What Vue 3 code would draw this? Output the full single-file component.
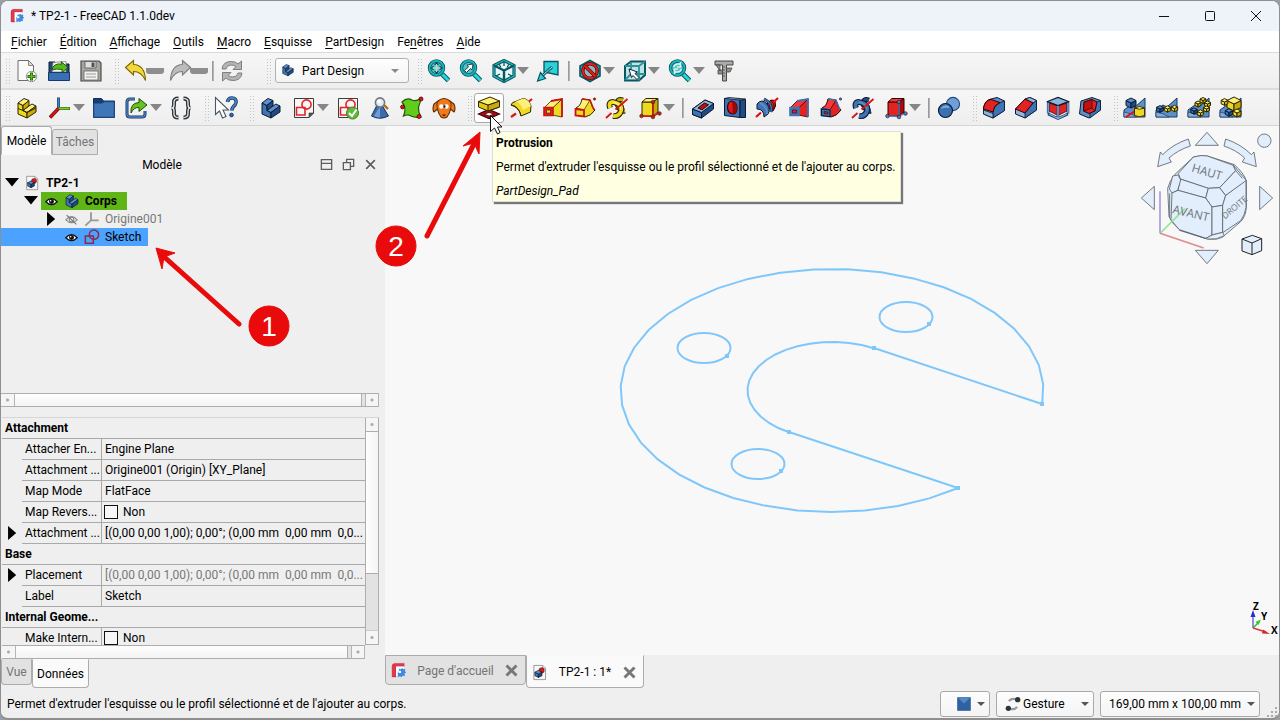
<script setup>
import { computed } from 'vue'

const p = (d, fill = 'none', stroke = 'none', w = 1) => ({ d, fill, stroke, 'stroke-width': w })
const circ = (x, y, r, fill = 'none', stroke = 'none', w = 1) =>
  p(`M${x - r} ${y}a${r} ${r} 0 1 0 ${2 * r} 0a${r} ${r} 0 1 0 ${-2 * r} 0Z`, fill, stroke, w)

const NAVY = '#0b1a2e'
const OLIVE = '#2b2500'
const BLUE = ['#5d8fca', '#3f74b4', '#234b83']
const LIGHT = ['#8fb5de', '#4c80bd', '#2f5f9e']
const YELLOW = ['#fdf07a', '#efd81f', '#c9ab06']
const RED = ['#f23a3a', '#e32222', '#b00808']
const TEAL = '#23d9dd'
const TEALD = '#0a5560'

const body = (c, s) => [
  p('M3 7L8 9.5V14.5L12 16.5V22L3 18Z', c[1], s),
  p('M3 7L9 2.5L14 4.5L8 9.5Z', c[0], s),
  p('M8 9.5L14 4.5V10L8 14.5Z', c[2], s),
  p('M8 14.5L14 10L17 8L21 10L12 16.5Z', c[0], s),
  p('M12 16.5L21 10V16L12 22Z', c[2], s),
]
const cube = (x, y, r, c, s, w = 1) => {
  const h = r / 2
  return [
    p(`M${x - r} ${y - h}L${x} ${y}V${y + r}L${x - r} ${y + h}Z`, c[1], s, w),
    p(`M${x + r} ${y - h}L${x} ${y}V${y + r}L${x + r} ${y + h}Z`, c[2], s, w),
    p(`M${x - r} ${y - h}L${x} ${y - r}L${x + r} ${y - h}L${x} ${y}Z`, c[0], s, w),
  ]
}
const magnifier = [
  p('M15 15L21.500 21.500', 'none', TEALD, 5),
  p('M15 15L21.300 21.300', 'none', TEAL, 3),
  circ(9.500, 9, 7, '#52c3c7', TEALD, 3.4),
  circ(9.500, 9, 7, 'none', '#18b9be', 1.8),
]
const revolved = (c, s, a) => [
  p('M2 21L7 17.500', 'none', a, 2.2),
  p('M18 7L23 3', 'none', a, 2.2),
  p('M2 9Q3 6 6.500 5.500L14 2.500Q20 3 22 10L21.500 16L12 20Q11 12 2 9Z', c[1], s),
  p('M6.500 5.500L14 2.500Q20 3 22 10L14 14Q12 7 6.500 5.500Z', c[0], 'none'),
  p('M2 9Q9 9 12 20', 'none', s, 0.8),
]
const groove = (c, r) => [
  p('M12 8Q16 2 20 5Q22 10 18 15L13 12Z', r[1], '#300', 1),
  p('M15 4Q20 7 19 13', 'none', '#400', 1),
  p('M2 8Q7 2 12 8Q16 13 13 18L9 21Q9 13 2 13Z', c[1], NAVY),
  p('M5 7Q12 10 12 18', 'none', c[0], 2),
  p('M9 3Q18 7 16 16', 'none', NAVY, 3),
  p('M9 3Q18 7 16 16', 'none', c[1], 1.6),
  p('M1 21L6 16.500M18 6.500L23 2', 'none', '#e01010', 2.2),
]
const loft = (c, s, e, hole) => [
  p('M3 12L10 5L21 3L12 12Z', c[0], s, 0.8),
  p('M11 12.500L21 3V21L11 19Z', c[1], s, 0.8),
  p('M10 5L21 3V21', 'none', e, 1.8),
  p('M3 11.500H12V19.500H3Z', hole, e, 1.6),
  p('M5.500 14H9.500V17H5.500Z', c[1], s, 0.6),
]
const sweep = (c, s, e) => [
  p('M3 12Q8 10 9 3L17 4Q19 12 22 14Q18 20 12 21Z', c[1], s),
  p('M9 3L17 4Q14 9 11 14Q7 13 3 12Q8 10 9 3Z', c[0], s, 0.7),
  p('M9 3L17 4L21 14', 'none', e, 1.5),
  p('M2.500 13L11 14V20.500L2.500 19.500Z', c[1], e, 1.8),
  circ(21.500, 3, 1.2, e, s, 0.5),
]
const helix = (c, s) => [
  p('M18 4Q12 2 12 8Q15 16 20 15', 'none', s, 5),
  p('M18 4Q12 2 12 8Q15 16 20 15', 'none', c[2], 3),
  p('M5 12Q3 6 8 6Q18 8 16 15Q14 21 8 20', 'none', s, 5.8),
  p('M5 12Q3 6 8 6Q18 8 16 15Q14 21 8 20', 'none', c[1], 3.8),
  p('M8 6Q16 8 15.500 14', 'none', c[0], 1.4),
  p('M1 22L6.500 17M10.500 13.500L22.500 3', 'none', '#d91414', 1.8),
]
const primitive = (c, s, dot) => [
  p('M4 6H15V20H4Z', c[1], s),
  p('M4 6L8 2.500H20L15 6Z', c[0], s),
  p('M15 6L20 2.500V16L15 20Z', c[2], s),
  p('M4 20L15 20.500L21 17M15 20V6', 'none', dot, 1.4),
  circ(3.500, 20, 1.8, dot, s, 0.6),
  circ(15, 21, 1.8, dot, s, 0.6),
  circ(21.500, 17.500, 1.8, dot, s, 0.6),
  circ(15, 6, 1.8, dot, s, 0.6),
]
const terrain = [
  p('M1 21V14L8 9L12 11L22 2V21Z', '#5c8fca', '#163a66'),
  p('M1 16Q8 17 14 21H1Z', '#86aedb', '#163a66', 0.7),
]
const sketchSheet = [
  p('M2.500 2.500H21.500V17L17 21.500H2.500Z', '#f7f7f5', '#3c3c3a'),
  p('M21.500 17L17 21.500V17Z', '#555', '#333', 0.6),
  p('M4.500 11.500H13V19H4.500Z', 'none', '#e8212b', 1.6),
  circ(14.500, 8.500, 4.6, 'none', '#e8212b', 1.6),
]
const docSheet = [
  p('M4 2H16.500L20.500 6V22H4Z', '#f7f7f5', '#777'),
  p('M16.500 2V6H20.500', '#ddd', '#777', 0.8),
]

const icons = {
  app: [
    p('M3 21V6Q3 2 7 2H20V6.500H8.500V21Z', '#e0394b', '#b32435', 0.6),
    p('M8.500 6.500H20V9.500H13V20H8.500Z', '#fff'),
    p('M13 9L15 10.500L17 8.500L18.500 10L21.500 10L21 13L23 14.500L20.500 16.500L21 20L18 19.500L16 21.500L14 20L11 21.500V14L12.500 13Z', '#3f8be0'),
    p('M12 12.500H15.500V15.500H12Z', '#fff'),
  ],
  newDoc: [
    p('M3 1.500H13.500L18.500 6.500V21.500H3Z', '#fafaf8', '#6e6e6c'),
    p('M13.500 1.500V6.500H18.500Z', '#d8d8d6', '#6e6e6c', 0.8),
    circ(16.500, 17.500, 5.2, '#fff', '#777', 0.8),
    p('M16.500 13.500V21.500M12.500 17.500H20.500', 'none', '#1d5c0c', 3),
    p('M16.500 14.300V20.700M13.300 17.500H19.700', 'none', '#5cc21a', 1.6),
  ],
  open: [
    p('M2 3H8L9 5H22V14H2Z', '#1f4a80', NAVY),
    p('M6 3.500L19 2.500V13H5Z', '#f4f4f2', '#777', 0.7),
    p('M5 11Q6 4 15 5L14 2.500L21 8.500L15 14V10.500Q9 9.500 5 11Z', '#57b91c', '#1d4d08', 0.9),
    p('M1.500 13.500H22.500V21.500H1.500Z', '#3a70b3', '#173b69'),
  ],
  save: [
    p('M2 2H20L22 4V22H2Z', '#a3a6a1', '#4b4d4a', 1.2),
    p('M6 2.500H17V9H6Z', '#dfe0de', '#555', 0.8),
    p('M12.500 3.500H15.500V8H12.500Z', '#50524f'),
    p('M5 12H19V21H5Z', '#f2f2f0', '#666', 0.8),
    p('M7 15H17M7 18H17', 'none', '#999', 1),
  ],
  undo: [p('M1.500 8.500L9.500 1.500V5.500Q21 6 21.500 21.500Q17.500 12.500 9.500 12.500V16Z', '#f2d93b', '#7d6500', 1.1)],
  redo: [p('M22.500 8.500L14.500 1.500V5.500Q3 6 2.500 21.500Q6.500 12.500 14.500 12.500V16Z', '#bcbcbc', '#7e7e7e', 1.1)],
  refresh: [
    p('M2 10Q3 2.500 11 2.500Q16 2.500 18 5L21.500 2V10.500H13L16 7.500Q14 6 11 6Q6.500 6 6 10Z', '#b5b5b5', '#7e7e7e'),
    p('M22 14Q21 21.500 13 21.500Q8 21.500 6 19L2.500 22V13.500H11L8 16.500Q10 18 13 18Q17.500 18 18 14Z', '#b5b5b5', '#7e7e7e'),
  ],
  fitAll: [...magnifier, p('M9.500 3L12 6H7ZM9.500 15L7 12H12ZM3.500 9L6.500 6.500V11.500ZM15.500 9L12.500 11.500V6.500Z', '#17383c'), p('M9.500 5V13M5.500 9H13.500', 'none', '#b8dfe0', 1.4)],
  fitSel: [...magnifier, p('M5.500 11.500L9.500 8L8 6L14 5L13 11L11.500 9.500L7.500 13.500Z', '#fff', '#17383c', 0.9)],
  iso: [
    p('M2 6.500L12 1.500L22 6.500V17L12 22.500L2 17Z', '#e6f6f6', TEALD, 3.2),
    p('M2 6.500L12 1.500L22 6.500V17L12 22.500L2 17Z', 'none', '#1fb7bc', 1.3),
    p('M2 6.500L12 11.500L22 6.500M12 11.500V22.500', 'none', TEALD, 2.4),
    p('M12 2V7M4 17L8 15M20 17L16 15M7 5L9 8.500M17 5L15 8.500', 'none', TEALD, 1.3),
  ],
  face: [
    p('M8 2.500H22V16L8 13Z', '#2bd0d8', TEALD, 1.3),
    p('M16 8L6.500 16.500', 'none', TEALD, 3),
    p('M16 8L6.500 16.500', 'none', '#9ff0f0', 1),
    p('M4.500 13.500L1.500 22L9.500 19.500Z', '#2bd0d8', TEALD, 1.2),
  ],
  drawStyle: [
    p('M2 7L12 1.500L22 7V17L12 22.500L2 17Z', '#2bbfc4', TEALD, 1.6),
    circ(12, 12, 7.2, '#8fb8b8', '#5e0606', 3.4),
    circ(12, 12, 7.2, 'none', '#e02020', 1.9),
    p('M7 7L17 17', 'none', '#5e0606', 3.6),
    p('M7 7L17 17', 'none', '#e02020', 2.2),
  ],
  boxSel: [
    p('M2 7L8 2.500H22V16L16 21.500H2Z', '#bfe3e3', TEALD, 2),
    p('M2 7H16V21.500M16 7L22 2.500M8 3V15H22M8 15L2 21', 'none', '#2a9499', 1.8),
    p('M6 10L14.500 13L12 14.500L16 18.500L14 20.500L10 16.500L8.500 18.500Z', '#fff', '#123', 1),
  ],
  sync: [...magnifier, p('M5.500 8Q7 4.500 11 5L12.500 4V8H9M13.500 10Q12 13.500 8 13L6.500 14V10H10', 'none', '#d8f2f2', 1.6)],
  caliper: [
    p('M3 2H21V6H14.500V22H10.500V6H3Z', '#a9aba6', '#464845'),
    p('M4 6L8 12V6ZM14.500 9H20L18 13H14.500ZM10.500 15H6V11H10.500Z', '#8e908b', '#464845', 0.8),
    p('M11 8H13M11 11H13M11 14H13M11 17H13', 'none', '#464845', 0.8),
  ],
  stdPart: [
    ...body(YELLOW, OLIVE),
    p('M3 12.500L8 14.500L12 16.500L21 12', 'none', OLIVE, 1),
  ],
  axes: [
    p('M10.500 12V1.500', 'none', '#1b3f70', 3), p('M10.500 12V2', 'none', '#4a7fc0', 1.8),
    p('M10.500 12.500H22', 'none', '#275c0c', 3.2), p('M11 12.500H21.500', 'none', '#72d02c', 1.8),
    p('M10.500 12.500L2 21.500', 'none', '#6b0505', 3.4), p('M10.500 12.500L2.500 21', 'none', '#d81818', 2),
  ],
  folder: [p('M1.500 2.500H9.500L11.500 5H22.500V21.500H1.500Z', '#173e72', '#10305c'), p('M2 7.500H10L12 6H22V21H2Z', '#3f76b8', '#2a5a97')],
  share: [
    p('M10 3H5Q2 3 2 6V18Q2 21 5 21H17Q20 21 20 18V15', 'none', '#173b69', 3),
    p('M10 3H5Q2 3 2 6V18Q2 21 5 21H17Q20 21 20 18V15', 'none', '#4c80bd', 1.3),
    p('M6 17Q5 7 14 6.500V2.500L22 9L14 15.500V11.500Q9 11 6 17Z', '#63c421', '#1d4d08'),
  ],
  braces: [
    p('M9.500 2.500Q5 2.500 5 6V9Q5 12 2.500 12Q5 12 5 15V18Q5 21.500 9.500 21.500M14.500 2.500Q19 2.500 19 6V9Q19 12 21.500 12Q19 12 19 15V18Q19 21.500 14.500 21.500', 'none', '#2e363c', 4),
    p('M9.500 2.500Q5 2.500 5 6V9Q5 12 2.500 12Q5 12 5 15V18Q5 21.500 9.500 21.500M14.500 2.500Q19 2.500 19 6V9Q19 12 21.500 12Q19 12 19 15V18Q19 21.500 14.500 21.500', 'none', '#f6f6f6', 1.2),
  ],
  whatsThis: [
    p('M13.500 6Q14 2 18 2Q22.500 2 22 6.500Q21.500 9 19.500 10.500Q18 12 18 14.500', 'none', '#173b69', 3.6),
    p('M13.500 6Q14 2 18 2Q22.500 2 22 6.500Q21.500 9 19.500 10.500Q18 12 18 14.500', 'none', '#4c80bd', 1.8),
    circ(17.500, 19, 1.9, '#3465a4', '#173b69', 0.8),
    p('M1.500 1.500V18.500L5.500 15L8.500 22L12 20.500L9 14H14.500Z', '#fcfcfc', '#4b5966', 1.1),
  ],
  body: body(BLUE, NAVY),
  sketch: sketchSheet,
  validate: [...sketchSheet, circ(16.500, 17, 6, '#62b93b', '#3e8420', 1), p('M13 17L16 20L20.500 13.500', 'none', '#fff', 2)],
  checkGeo: [
    p('M8.500 10H14.500L20.500 20Q12 24.500 3.500 20Z', '#3a6cad', '#14305a'),
    p('M11 12L6 20Q9 21.500 12 21.500V12Z', '#6f9dd3'),
    p('M16 9L20 13', 'none', '#b06a10', 2.4),
    circ(12, 6.500, 4.6, '#dfeaf5', '#777', 1.6),
    circ(11, 5.500, 1.8, '#fff'),
  ],
  binder: [
    p('M2 6Q7 1 12 4Q16 6 21 2Q20 8 18.500 11Q18 16 21 21Q15 22 11 20Q8 18 3.500 20Q7 12 2 6Z', '#62cc1d', '#1c5508', 1.2),
    circ(21, 3, 2, '#e01717', '#5a0000', 0.8), circ(2.500, 11, 1.9, '#e01717', '#5a0000', 0.8), circ(19, 20.500, 2, '#e01717', '#5a0000', 0.8),
  ],
  clone: [
    p('M6 5Q12 0 18 5L22 8Q24 13 22 16L18.500 13Q18 17 15 21Q12 23 9 21Q6 17 5.500 13L2 16Q0 13 2 8Z', '#ee7a1d', '#5c2500', 1.1),
    p('M6 5Q4 9 5.500 13M18 5Q20 9 18.500 13', 'none', '#8c3f05', 1.2),
    circ(9.300, 10.500, 2.2, '#fff'), circ(14.500, 10.500, 2.2, '#fff'), circ(12.500, 10.500, 1.2, '#222'),
    p('M10 18.500H14L12 20.500Z', '#3a1800'),
  ],
  pad: [
    p('M12 13.500L22.500 18L12 22.500L1.500 18Z', '#b00d18', '#3c0005', 1.2), p('M12 16.500L17 18L12 20L7 18Z', '#fff', '#50000a', 0.8),
    p('M1.500 5.500V11L11 15L22.500 11V5L11 9Z', '#e3c90f', OLIVE), p('M11 9V15L22.500 11V5Z', '#c7aa08', OLIVE),
    p('M1.500 5.500L13 1L22.500 5L11 9Z', '#fcef74', OLIVE),
  ],
  revolution: revolved(YELLOW, OLIVE, '#d81818'),
  addLoft: loft(YELLOW, OLIVE, '#c81414', '#e02020'),
  addPipe: sweep(YELLOW, OLIVE, '#c81414'),
  addHelix: helix(YELLOW, OLIVE),
  addPrim: primitive(YELLOW, OLIVE, '#d81818'),
  pocket: [
    p('M1.500 13L14 4L22.500 7.500V13L10.500 22L1.500 18.500Z', BLUE[2], NAVY),
    p('M1.500 13L10.500 16.500V22L1.500 18.500Z', BLUE[1], NAVY),
    p('M1.500 13L14 4L22.500 7.500L10.500 16.500Z', LIGHT[0], NAVY),
    p('M7 12L13.500 7L17.500 8.800L11 13.800Z', '#c40f0f', '#300', 1),
  ],
  hole: [
    p('M1.500 2.500H17V21.500L1.500 19.500Z', BLUE[1], NAVY), p('M17 4L22.500 3.500V21.500H17Z', BLUE[2], NAVY), p('M1.500 2.500L17 4L22.500 3L6 1.500Z', LIGHT[0], NAVY, 0.8),
    p('M9 5Q14 6 14 12Q14 18 9.500 18Q4.500 17 4.500 11Q5 5 9 5Z', '#e01b1b', '#300', 1.2), p('M9 5Q14 6 14 12Q14 18 9.500 18Q10 12 9 5Z', '#9c0808'),
  ],
  groove: groove(BLUE, RED),
  subLoft: loft(RED, '#300', '#3f74b4', '#3f74b4'),
  subPipe: [...sweep(RED, '#300', '#3f74b4'), p('M2.500 13L11 14V20.500L2.500 19.500Z', '#3f74b4', NAVY, 1.2), p('M5 15.500L9 16V18L5 17.500Z', '#c22', NAVY, 0.7)],
  subHelix: helix(BLUE, NAVY),
  subPrim: primitive(RED, '#300', '#4c80bd'),
  boolean: [circ(16, 8, 6.6, '#6f9fd6', '#234b83', 1.1), circ(8.500, 14.500, 7, '#3c70b0', NAVY, 1.2), p('M4 13Q5 9.500 9 9.500Q13 10 12 12Q8 11 4 13Z', '#82acdc')],
  fillet: [
    p('M1.500 12Q3 4 9 3L15 1.500L22.500 5V14.500L11 22L1.500 18Z', BLUE[0], NAVY),
    p('M11 22V16Q12 8 22.500 5V14.500Z', BLUE[1], NAVY, 0.8), p('M1.500 18V14L11 17.500V22Z', LIGHT[0], NAVY, 0.8),
    p('M1.500 12Q3 4 9 3.500L18 6.500Q12 9 11 16L1.500 13Z', RED[1], '#300', 1),
  ],
  chamfer: [
    p('M1.500 13L11 3L16 1.500L22.500 4.500V14L11 22L1.500 18Z', LIGHT[0], NAVY),
    p('M11 22V17L19 7L22.500 4.500V14Z', BLUE[1], NAVY, 0.8), p('M11 3L16 1.500L22.500 4.500L19 7Z', LIGHT[0], NAVY, 0.8),
    p('M1.500 13L11 3L19 7L11 17Z', RED[1], '#300', 1),
  ],
  draft: [
    p('M2 6L12 9.500L22 6V17L12 22.500L2 17Z', '#eef3f8', NAVY), p('M3 7L12 10L21 7V15L12 19.500L3 15Z', RED[1], '#300', 0.8),
    p('M1.500 5.500L12 1.500L22.500 5.500L12 9.500Z', LIGHT[0], NAVY, 1.2),
    p('M12 9.500V22.500M2.200 6V17.500M22 6V17.500M2 18L12 22.500L22 18', 'none', '#1d4375', 2.6), p('M12 10V22M2.200 7V17M22 7V17M3 18L12 22.500L21 18', 'none', '#86aedb', 1.3),
  ],
  thickness: [
    p('M3 5L14 1.500L22.500 4.500V14L11 22L1.500 18Z', BLUE[0], NAVY), p('M17 7L22.500 4.500V14L12 22V17Z', BLUE[1], NAVY, 0.8),
    p('M6 6L14 3.500L19 6L17 15L11 17.500L5.500 15Z', RED[1], '#300', 1), p('M6 6L14 3.500V12L5.500 15Z', '#c01010', '#300', 0.7), p('M14 12L17 15', 'none', '#300', 0.8),
  ],
  mirrored: [...terrain, ...cube(8, 7, 5, BLUE, NAVY), p('M3 21L12 15', 'none', '#e01010', 2), p('M11.500 12V19.500Q16.500 22 21.500 19.500V12Z', YELLOW[1], OLIVE, 0.9), p('M11.500 12Q16.500 9 21.500 12Q16.500 14.500 11.500 12Z', YELLOW[0], OLIVE, 0.9)],
  linear: [...terrain, ...cube(5, 13, 3.4, BLUE, NAVY), ...cube(12.500, 13, 3.2, YELLOW, OLIVE), ...cube(19.500, 12.500, 3.2, YELLOW, OLIVE)],
  polar: [...terrain, ...cube(11, 8, 3, YELLOW, OLIVE), ...cube(16, 4.500, 3, YELLOW, OLIVE), ...cube(20.500, 8, 3, YELLOW, OLIVE), ...cube(19.500, 13, 3, YELLOW, OLIVE), ...cube(13.500, 17, 3.2, YELLOW, OLIVE), ...cube(7, 15, 3.2, BLUE, NAVY)],
  multi: [...terrain, ...cube(15, 8, 7, YELLOW, OLIVE), ...cube(5.500, 6, 3.4, YELLOW, OLIVE), ...cube(10, 16.500, 3.8, BLUE, NAVY), ...cube(18, 17, 4, YELLOW, OLIVE)],
  docPart: [...docSheet, circ(15, 9, 3.8, '#d81818', '#500', 0.7), ...cube(10.500, 14, 5, BLUE, NAVY)],
  sketchSmall: [p('M2 10.500H14V21.500H2Z', 'none', '#8c2a4c', 2.3), circ(15, 8.500, 7, 'none', '#8c2a4c', 2.3)],
  originGray: [p('M10.500 14V2M10.500 14H22M10.500 14L2 22', 'none', '#999', 2.8)],
  eye: [p('M1.500 12.500Q12 1 22.500 12.500Q12 23 1.500 12.500Z', '#fff', '#111', 2.4), circ(12, 12, 4.6, '#111'), circ(10.500, 10.500, 1.4, '#fff')],
  eyeOff: [p('M1.500 12.500Q12 1 22.500 12.500Q12 23 1.500 12.500Z', 'none', '#8a8a8a', 2), circ(12, 12, 4.2, 'none', '#8a8a8a', 2), p('M3 4L21 21', 'none', '#777', 2)],
  close: [p('M4 4L20 20M20 4L4 20', 'none', '#777', 4.6)],
  closeThin: [p('M4 4L20 20M20 4L4 20', 'none', '#5c5c5c', 3)],
  dock: [p('M2.500 3H21.500V21H2.500ZM2.500 10H21.500', 'none', '#5c5c5c', 2.4)],
  float: [p('M8.500 9V2.500H21.500V15.500H15M2.500 8.500H15.500V21.500H2.500Z', 'none', '#5c5c5c', 2.4)],
  orbit: [
    p('M6 8Q9 2.500 17 5', 'none', '#999', 3.2), circ(19, 5.500, 4, '#2d3436'),
    p('M18 16Q15 21.500 7 19', 'none', '#999', 3.2), circ(5, 18.500, 4, '#2d3436'),
  ],
  blueSquare: [p('M1 1H23V23H1Z', '#2f62a3', '#1c4276', 1), p('M1 1H23L12 11Z', '#5588c4')],
}

const b = (icon, label, split = false, active = false) => ({ icon, label, split, active })
const sep = { sep: true }

const fileBar = [b('newDoc', 'Nouveau'), b('open', 'Ouvrir'), b('save', 'Enregistrer')]
const historyBar = [b('undo', 'Annuler', true), b('redo', 'Rétablir', true), sep, b('refresh', 'Rafraîchir')]
const viewBar = [
  b('fitAll', 'Tout afficher'), b('fitSel', 'Ajuster à la sélection'), b('iso', 'Isométrique', true), b('face', 'Aligner'), sep,
  b('drawStyle', 'Style de représentation', true), b('boxSel', 'Sélection', true), b('sync', 'Synchroniser la vue', true), b('caliper', 'Mesurer'),
]
const workGroups = [
  [b('stdPart', 'Pièce'), b('axes', 'Repère', true), b('folder', 'Groupe'), b('share', 'Lien', true), b('braces', 'Variables')],
  [b('whatsThis', "Qu'est-ce que c'est ?")],
  [b('body', 'Corps'), b('sketch', 'Esquisse', true), b('validate', 'Valider'), b('checkGeo', 'Vérifier'), b('binder', 'Forme liée'), b('clone', 'Clone')],
  [
    b('pad', 'Protrusion', false, true), b('revolution', 'Révolution'), b('addLoft', 'Lissage'), b('addPipe', 'Balayage'), b('addHelix', 'Hélice'), b('addPrim', 'Primitive', true), sep,
    b('pocket', 'Cavité'), b('hole', 'Perçage'), b('groove', 'Rainure'), b('subLoft', 'Lissage soustractif'), b('subPipe', 'Balayage soustractif'), b('subHelix', 'Hélice soustractive'), b('subPrim', 'Primitive soustractive', true), sep,
    b('boolean', 'Opération booléenne'),
  ],
  [b('fillet', 'Congé'), b('chamfer', 'Chanfrein'), b('draft', 'Dépouille'), b('thickness', 'Coque')],
  [b('mirrored', 'Symétrie'), b('linear', 'Répétition linéaire'), b('polar', 'Répétition circulaire'), b('multi', 'Transformation multiple')],
]

const menus = [['', 'F', 'ichier'], ['', 'É', 'dition'], ['', 'A', 'ffichage'], ['', 'O', 'utils'], ['', 'M', 'acro'], ['', 'E', 'squisse'], ['', 'P', 'artDesign'], ['Fe', 'n', 'êtres'], ['', 'A', 'ide']]

const placement = '[(0,00 0,00 1,00); 0,00°; (0,00 mm\u00a0 0,00 mm\u00a0 0,0...'
const properties = [
  { group: 'Attachment' },
  { name: 'Attacher En...', value: 'Engine Plane' },
  { name: 'Attachment ...', value: 'Origine001 (Origin) [XY_Plane]' },
  { name: 'Map Mode', value: 'FlatFace' },
  { name: 'Map Revers...', check: true },
  { name: 'Attachment ...', value: placement, expand: true },
  { group: 'Base' },
  { name: 'Placement', value: placement, expand: true, muted: true },
  { name: 'Label', value: 'Sketch' },
  { group: 'Internal Geome...' },
  { name: 'Make Intern...', check: true },
]

const arc = (rx, ry, from, to, n) =>
  Array.from({ length: n + 1 }, (_, i) => {
    const t = ((from + ((to - from) * i) / n) * Math.PI) / 180
    return `${(832 + rx * Math.cos(t)).toFixed(1)},${(390.5 - ry * Math.sin(t)).toFixed(1)}`
  }).join(' ')
const outer = computed(() => arc(211.5, 121.5, -6.3, 306.6, 34))
const inner = computed(() => arc(84.5, 48.5, 60.5, 239.5, 20))
const holes = [[906, 317], [704, 348], [758, 464]]
const vertices = [[874, 348], [1042, 404], [789, 432], [958, 488], [929, 324], [727, 356], [781, 471]]
</script>

<template>
  <div class="window">
    <header class="titlebar">
      <svg class="logo" viewBox="0 0 24 24"><path v-for="(s, i) in icons.app" :key="i" v-bind="s" /></svg>
      <h1>* TP2-1 - FreeCAD 1.1.0dev</h1>
      <div class="controls">
        <button aria-label="Réduire"><svg viewBox="0 0 12 12"><path d="M1 6.500H11" /></svg></button>
        <button aria-label="Agrandir"><svg viewBox="0 0 12 12"><rect x="1.500" y="1.500" width="9" height="9" rx="1" /></svg></button>
        <button aria-label="Fermer"><svg viewBox="0 0 12 12"><path d="M1 1L11 11M11 1L1 11" /></svg></button>
      </div>
    </header>

    <nav class="menubar">
      <button v-for="m in menus" :key="m.join('')">{{ m[0] }}<u>{{ m[1] }}</u>{{ m[2] }}</button>
    </nav>

    <div class="toolbar first">
      <div v-for="(group, g) in [fileBar, historyBar]" :key="g" class="group" :class="{ tight: g === 1 }">
        <span class="grip"></span>
        <template v-for="(t, i) in group" :key="i">
          <span v-if="t.sep" class="sep"></span>
          <button v-else class="tool" :class="{ split: t.split }" :aria-label="t.label">
            <svg viewBox="0 0 24 24"><path v-for="(s, k) in icons[t.icon]" :key="k" v-bind="s" /></svg>
            <i v-if="t.split" class="slab"></i>
          </button>
        </template>
      </div>
      <div class="group bench">
        <span class="grip"></span>
        <div class="combo">
          <svg viewBox="0 0 24 24"><path v-for="(s, k) in icons.body" :key="k" v-bind="s" /></svg>
          <select aria-label="Atelier"><option>Part Design</option></select>
          <i class="caret"></i>
        </div>
      </div>
      <div class="group view">
        <span class="grip"></span>
        <template v-for="(t, i) in viewBar" :key="i">
          <span v-if="t.sep" class="sep"></span>
          <button v-else class="tool" :class="{ split: t.split }" :aria-label="t.label">
            <svg viewBox="0 0 24 24"><path v-for="(s, k) in icons[t.icon]" :key="k" v-bind="s" /></svg>
            <i v-if="t.split" class="drop"></i>
          </button>
        </template>
      </div>
    </div>

    <div class="toolbar second">
      <div v-for="(group, g) in workGroups" :key="g" class="group">
        <span class="grip"></span>
        <template v-for="(t, i) in group" :key="i">
          <span v-if="t.sep" class="sep"></span>
          <button v-else class="tool" :class="{ split: t.split, active: t.active }" :aria-label="t.label">
            <svg viewBox="0 0 24 24"><path v-for="(s, k) in icons[t.icon]" :key="k" v-bind="s" /></svg>
            <i v-if="t.split" class="drop"></i>
          </button>
        </template>
      </div>
    </div>

    <div class="main">
      <aside class="side">
        <div class="tabs top">
          <button class="on">Modèle</button>
          <button>Tâches</button>
        </div>
        <div class="dock-title">
          <h2>Modèle</h2>
          <button v-for="n in ['dock', 'float', 'closeThin']" :key="n" :aria-label="n">
            <svg viewBox="0 0 24 24"><path v-for="(s, k) in icons[n]" :key="k" v-bind="s" /></svg>
          </button>
        </div>
        <ul class="tree">
          <li class="l0">
            <i class="tri down"></i>
            <span class="node"><svg class="t-icon" viewBox="0 0 24 24"><path v-for="(s, k) in icons.docPart" :key="k" v-bind="s" /></svg><b>TP2-1</b></span>
          </li>
          <li class="l1">
            <i class="tri down"></i>
            <span class="node green"><svg class="t-eye" viewBox="0 0 24 24"><path v-for="(s, k) in icons.eye" :key="k" v-bind="s" /></svg><svg class="t-icon" viewBox="0 0 24 24"><path v-for="(s, k) in icons.body" :key="k" v-bind="s" /></svg><b>Corps</b></span>
          </li>
          <li class="l2">
            <i class="tri right"></i>
            <span class="node faded"><svg class="t-eye" viewBox="0 0 24 24"><path v-for="(s, k) in icons.eyeOff" :key="k" v-bind="s" /></svg><svg class="t-icon" viewBox="0 0 24 24"><path v-for="(s, k) in icons.originGray" :key="k" v-bind="s" /></svg>Origine001</span>
          </li>
          <li class="l2 selected">
            <i class="tri"></i>
            <span class="node"><svg class="t-eye" viewBox="0 0 24 24"><path v-for="(s, k) in icons.eye" :key="k" v-bind="s" /></svg><svg class="t-icon" viewBox="0 0 24 24"><path v-for="(s, k) in icons.sketchSmall" :key="k" v-bind="s" /></svg>Sketch</span>
          </li>
        </ul>
        <div class="hscroll"><i></i><b></b><i></i></div>

        <section class="props">
          <div class="props-body">
            <div class="props-view">
              <table>
                <colgroup><col class="c-arrow"><col class="c-name"><col></colgroup>
                <tbody>
                  <tr v-for="(r, i) in properties" :key="i">
                    <th v-if="r.group" class="group-name" colspan="3">{{ r.group }}</th>
                    <template v-else>
                      <td class="arrow"><i v-if="r.expand" class="tri right"></i></td>
                      <th scope="row">{{ r.name }}</th>
                      <td :class="{ muted: r.muted }">
                        <label v-if="r.check"><input type="checkbox">Non</label>
                        <template v-else>{{ r.value }}</template>
                      </td>
                    </template>
                  </tr>
                </tbody>
              </table>
            </div>
            <div class="vscroll"><i></i><b></b><em></em><i></i></div>
          </div>
          <div class="hscroll low"><i></i><b></b><i></i></div>
        </section>
        <div class="tabs bottom">
          <button>Vue</button>
          <button class="on">Données</button>
        </div>
      </aside>

      <section class="work">
        <div class="viewport">
          <svg class="sketch" viewBox="385 126 894 529">
            <polyline :points="outer" />
            <polyline :points="inner" />
            <path d="M874 348L1042 404M789 432L958 488" />
            <ellipse v-for="h in holes" :key="h[0]" :cx="h[0]" :cy="h[1]" rx="26.500" ry="15" />
            <rect v-for="v in vertices" :key="v[0]" class="vertex" :x="v[0] - 2" :y="v[1] - 2" width="4" height="4" />
          </svg>

          <svg class="navcube" viewBox="0 0 480 480">
            <g class="face">
              <path d="M261 37L295 76H226ZM226 391H295L261 431ZM103 199V269L64 234ZM419 199V269L458 234Z" />
              <circle cx="433" cy="62" r="20" />
              <path d="M205 57L211 78Q172 91 147 114L154 126L113 140L121 96L128 104Q158 73 205 57Z" />
              <path d="M317 57L312 78Q350 91 374 114L367 126L409 140L402 96L394 104Q364 73 317 57Z" />
              <path d="M220 111Q246 104 262 108L343 134Q372 160 379 182V262Q377 290 362 305L308 351Q290 361 262 357L178 329Q154 308 147 290L143 205Q147 186 165 163Z" />
              <path d="M220 111Q246 104 262 108L340 136L347 152L299 203L265 205L181 177L175 160Z" />
              <path d="M181 177L265 205L257 234L174 211Z" />
              <path d="M148 207L158 168L174 165L182 180L173 211L156 219Z" />
              <path d="M265 205L299 203L317 226L308 256L276 261L257 234Z" />
              <path d="M156 219L174 211L257 234L276 261V345L258 355L178 329L153 300Z" />
              <path d="M276 261L308 256V337L276 345Z" />
              <path d="M317 226L378 180V262Q375 285 362 302L308 338V256Z" />
              <path d="M347 152L340 136L376 178L378 182L317 226L299 203Z" />
              <path d="M258 355L276 345L308 337L313 347Q290 361 262 357Z" />
              <path d="M149 220V293M347 152L367 175M178 331L258 356" />
            </g>
            <g class="axis">
              <path d="M120 340V214" stroke="#9a94dc" />
              <path d="M120 340L195 266" stroke="#8be58f" />
              <path d="M120 340L251 384" stroke="#df7f80" />
            </g>
            <g class="facetext">
              <text x="260" y="168" transform="rotate(16 260 158)">HAUT</text>
              <text x="213" y="292" transform="rotate(13 213 280)">AVANT</text>
              <text class="small" x="344" y="271" transform="rotate(-40 344 262)">DROITE</text>
            </g>
            <g class="minicube">
              <path d="M366 357L397 346L425 356V392L396 404L366 393Z" />
              <path d="M366 357L396 369L425 356M396 369V404" />
            </g>
          </svg>

          <svg class="gizmo" viewBox="0 0 30 36">
            <path d="M4 27V14" stroke="#8f8fe0" stroke-width="2" /><path d="M1.500 16L4 9L6.500 16Z" fill="#2a2ad0" />
            <path d="M4 27L9 22" stroke="#2fb22f" stroke-width="1.500" /><path d="M12 18.500L6.500 21L9.500 24Z" fill="#28cc28" />
            <path d="M4 27L17 31" stroke="#d04040" stroke-width="1.500" /><path d="M21 33L14 28.500L13 32.500Z" fill="#d42a2a" />
            <text x="4" y="9">Z</text><text x="12" y="19">Y</text><text x="22" y="33">X</text>
          </svg>

          <div class="tooltip" role="tooltip">
            <b>Protrusion</b>
            <p>Permet d'extruder l'esquisse ou le profil sélectionné et de l'ajouter au corps.</p>
            <em>PartDesign_Pad</em>
          </div>
        </div>
        <div class="tabs docs">
          <button>
            <svg viewBox="0 0 24 24"><path v-for="(s, i) in icons.app" :key="i" v-bind="s" /></svg>
            <span>Page d'accueil</span>
            <svg class="x" viewBox="0 0 24 24"><path v-for="(s, i) in icons.close" :key="i" v-bind="s" /></svg>
          </button>
          <button class="on">
            <svg viewBox="0 0 24 24"><path v-for="(s, i) in icons.docPart" :key="i" v-bind="s" /></svg>
            <span>TP2-1 : 1*</span>
            <svg class="x" viewBox="0 0 24 24"><path v-for="(s, i) in icons.close" :key="i" v-bind="s" /></svg>
          </button>
        </div>
      </section>
    </div>

    <footer class="status">
      <p>Permet d'extruder l'esquisse ou le profil sélectionné et de l'ajouter au corps.</p>
      <button class="s-color" aria-label="Notifications"><svg viewBox="0 0 24 24"><path v-for="(s, i) in icons.blueSquare" :key="i" v-bind="s" /></svg><i class="caret"></i></button>
      <button class="s-nav"><svg viewBox="0 0 24 24"><path v-for="(s, i) in icons.orbit" :key="i" v-bind="s" /></svg>Gesture<i class="caret"></i></button>
      <button class="s-size">169,00 mm x 100,00 mm<i class="caret"></i></button>
      <svg class="resize" viewBox="0 0 12 12"><path d="M9 1h2v2h-2zM9 5h2v2h-2zM5 5h2v2h-2zM9 9h2v2h-2zM5 9h2v2h-2zM1 9h2v2h-2z" /></svg>
    </footer>

    <svg class="notes" viewBox="0 0 1280 720">
      <g class="red">
        <path class="shaft" d="M239 324L162 255M427 236L477 138" />
        <path d="M156 248L175 253L164 257L162 269Z" />
        <path d="M480 132L479 154L474 143L463 146Z" />
        <circle cx="269" cy="326" r="20" />
        <circle cx="396" cy="246" r="20" />
      </g>
      <text x="269" y="336">1</text>
      <text x="396" y="256">2</text>
      <path class="cursor" d="M490.500 115.500V131.500L494.500 128L497.500 134L500 132.500L497.500 127H502Z" />
    </svg>
  </div>
</template>

<style>
body {
  margin: 0;
  background: #9b9ea3;
}
</style>

<style scoped>
* {
  box-sizing: border-box;
}
.window {
  position: relative;
  height: 100vh;
  min-height: 600px;
  display: flex;
  flex-direction: column;
  overflow: hidden;
  border: 1px solid #8f8f8f;
  border-bottom-width: 2px;
  border-radius: 8px;
  background: #efefef;
  color: #000;
  font: 12px/18px Roboto, "Open Sans", sans-serif;
}
button,
select {
  font: inherit;
  color: inherit;
  border: 0;
  background: none;
  padding: 0;
  margin: 0;
}
h1,
h2,
p,
ul {
  margin: 0;
  padding: 0;
  font: inherit;
  list-style: none;
}
svg {
  display: block;
  flex: none;
}
i {
  flex: none;
}

.titlebar {
  flex: 0 0 30px;
  display: flex;
  align-items: center;
  padding-left: 8px;
  background: #eef2f9;
}
.logo {
  width: 16px;
  height: 16px;
}
.titlebar h1 {
  flex: 1;
  margin-left: 6px;
}
.controls {
  display: flex;
}
.controls button {
  width: 46px;
  height: 30px;
  display: flex;
  align-items: center;
  justify-content: center;
}
.controls svg {
  width: 12px;
  height: 12px;
  fill: none;
  stroke: #111;
}

.menubar {
  flex: 0 0 22px;
  display: flex;
  align-items: center;
  gap: 13px;
  padding-left: 10px;
  background: #fff;
  border-bottom: 1px solid #dadada;
}
.menubar u {
  text-underline-offset: 2px;
}

.toolbar {
  display: flex;
  align-items: center;
  background: linear-gradient(#f6f6f6, #eee);
}
.toolbar.first {
  flex: 0 0 37px;
  border-bottom: 2px solid #dcdcdc;
}
.toolbar.second {
  flex: 0 0 36px;
  border-bottom: 1px solid #d4d4d4;
}
.group {
  display: flex;
  align-items: center;
  gap: 8px;
}
.group.tight {
  gap: 7px;
}
.grip {
  width: 6px;
  height: 26px;
  margin: 0 -4px 0 11px;
  background: radial-gradient(circle, #c4c4c4 1px, transparent 1px) 0 0 / 3px 3px;
}
.group.tight .grip {
  margin-right: -3px;
}
.toolbar .group:first-child .grip {
  margin-left: 4px;
}
.toolbar .bench .grip {
  margin: 0 -5px 0 22px;
}
.toolbar .view .grip {
  margin-left: 8px;
}
.sep {
  width: 1px;
  height: 20px;
  background: #9a9a9a;
  box-shadow: 1px 0 #b4b4b4;
}
.tool {
  width: 24px;
  height: 24px;
  display: flex;
  align-items: center;
}
.tool.split {
  width: 37px;
}
.view .tool.split,
.second .tool.split {
  padding-left: 1px;
}
.tool svg {
  width: 24px;
  height: 24px;
}
.tool.active {
  position: relative;
}
.tool.active svg {
  position: relative;
}
.tool.active::before {
  content: "";
  position: absolute;
  inset: -3px;
  background: #fff;
  border: 1px solid #a9a9a9;
  border-radius: 3px;
}
.drop {
  margin-left: 1px;
  border: 6px solid transparent;
  border-top: 7px solid #868686;
  border-bottom: 0;
}
.slab {
  width: 18px;
  height: 6px;
  margin-left: -2px;
  border-radius: 0 0 3px 3px;
  background: #8e8e8e;
}
.combo {
  position: relative;
  width: 134px;
  height: 25px;
}
.combo svg {
  position: absolute;
  z-index: 1;
  left: 6px;
  top: 5px;
  width: 14px;
  height: 14px;
}
.combo select {
  appearance: none;
  width: 100%;
  height: 100%;
  padding-left: 26px;
  border: 1px solid #b1b1b1;
  border-radius: 3px;
  background: linear-gradient(#fefefe, #f4f4f4);
}
.caret {
  border: 4px solid transparent;
  border-top: 4px solid #555;
  border-bottom: 0;
}
.combo .caret {
  position: absolute;
  right: 10px;
  top: 11px;
  border-top-color: #8a8a8a;
}

.main {
  flex: 1;
  min-height: 0;
  display: flex;
}
.side {
  flex: 0 0 384px;
  display: flex;
  flex-direction: column;
  padding-right: 6px;
}
.tabs {
  display: flex;
  align-items: flex-start;
}
.tabs button {
  border: 1px solid #acacac;
  background: #e2e2e2;
  color: #747474;
}
.tabs .on {
  background: #fafafa;
  color: #000;
}
.tabs.top {
  align-items: flex-end;
  height: 29px;
}
.tabs.top button {
  width: 46px;
  height: 26px;
  border-radius: 3px 3px 0 0;
}
.tabs.top .on {
  width: 51px;
  height: 29px;
  border-bottom-color: #fafafa;
}
.dock-title {
  display: flex;
  align-items: center;
  gap: 9px;
  height: 19px;
  padding: 0 2px 0 12px;
}
.dock-title h2 {
  flex: 1;
  text-align: center;
}
.dock-title svg {
  width: 13px;
  height: 13px;
}
.tree {
  flex: 1;
  min-height: 80px;
}
.tree li {
  display: flex;
  align-items: center;
  height: 18px;
}
.tree .l0 {
  padding-left: 4px;
}
.tree .l1 {
  padding-left: 23px;
}
.tree .l2 {
  padding-left: 43px;
}
.tri {
  width: 14px;
  height: 14px;
  display: block;
}
.tri.down {
  background: #000;
  clip-path: polygon(0 15%, 100% 15%, 50% 75%);
}
.tri.right {
  background: #000;
  clip-path: polygon(22% 0, 80% 50%, 22% 100%);
}
.node {
  display: flex;
  align-items: center;
  height: 18px;
  margin-left: 3px;
  padding: 0 8px 0 4px;
}
.t-eye {
  width: 13px;
  height: 13px;
  margin-right: 6px;
}
.t-icon {
  width: 16px;
  height: 16px;
  margin-right: 5px;
}
.l0 .t-icon {
  margin: 0 6px 0 -2px;
}
.green {
  width: 86px;
  background: #5fb515;
}
.faded {
  color: #777;
}
.selected {
  width: 147px;
  background: #4ba3ff;
}
.hscroll {
  flex: 0 0 14px;
  display: flex;
  border: solid #adadad;
  border-width: 1px 0;
  background: #e3e3e3;
}
.hscroll i,
.vscroll i {
  background: radial-gradient(circle, #aaa 1px, #f5f5f5 2px);
}
.hscroll i {
  width: 14px;
  border-right: 1px solid #b5b5b5;
}
.hscroll i:last-child {
  border-left: 1px solid #b5b5b5;
}
.hscroll b {
  flex: 1;
  margin-right: 3px;
  border-right: 1px solid #adadad;
  background: linear-gradient(#fefefe, #f4f4f4);
}
.props {
  flex: 0 0 242px;
  min-height: 0;
  display: flex;
  flex-direction: column;
  margin: 10px 0 0 1px;
  border-top: 1px solid #d6d6d6;
}
.props-body {
  flex: 1;
  min-height: 0;
  display: flex;
}
.props-view {
  flex: 1;
  min-width: 0;
  overflow: hidden;
}
table {
  width: 100%;
  table-layout: fixed;
  border-collapse: separate;
  border-spacing: 0;
}
.c-arrow {
  width: 20px;
}
.c-name {
  width: 80px;
}
th,
td {
  height: 21px;
  padding: 0 3px;
  border-bottom: 1px solid #a9a9a9;
  text-align: left;
  font-weight: 400;
  line-height: 20px;
  white-space: nowrap;
}
th[scope] {
  border-right: 1px solid #a9a9a9;
}
.arrow {
  padding: 0 0 0 3px;
  border-bottom-color: transparent;
}
.group-name {
  font-weight: 700;
}
.muted {
  color: #777;
}
td label {
  display: flex;
  align-items: center;
  gap: 5px;
}
td input {
  appearance: none;
  width: 14px;
  height: 14px;
  margin: 0 0 0 -1px;
  border: 1px solid #111;
  background: #f6f6f6;
}
.vscroll {
  flex: 0 0 14px;
  display: flex;
  flex-direction: column;
  border: solid #adadad;
  border-width: 0 1px;
}
.vscroll i {
  height: 14px;
  border-bottom: 1px solid #adadad;
}
.vscroll b {
  flex: 142;
  border-bottom: 1px solid #adadad;
  background: linear-gradient(90deg, #fefefe, #f4f4f4);
}
.vscroll em {
  flex: 57;
  background: #e2e2e2;
  border-bottom: 1px solid #ccc;
}
.hscroll.low {
  margin-right: 14px;
}
.tabs.bottom {
  height: 31px;
}
.tabs.bottom button {
  width: 31px;
  height: 26px;
  border-top-color: transparent;
  border-radius: 0 0 4px 4px;
}
.tabs.bottom .on {
  width: 57px;
  height: 29px;
}

.work {
  flex: 1;
  min-width: 0;
  display: flex;
  flex-direction: column;
}
.viewport {
  position: relative;
  flex: 1;
  min-height: 0;
  background: #f8f8f8;
}
.sketch {
  position: absolute;
  inset: 0;
  width: 100%;
  height: 100%;
  fill: none;
  stroke: #7fc7fb;
  stroke-width: 2;
}
.sketch .vertex {
  fill: #7fc7fb;
  stroke: none;
}
.navcube {
  position: absolute;
  right: -1px;
  top: -6px;
  width: 160px;
  height: 160px;
}
.face path,
.face circle {
  fill: #e2eefb;
  stroke: #59626b;
  stroke-width: 2.500;
  stroke-linejoin: round;
}
.face path:last-child {
  fill: none;
}
.axis path {
  stroke-width: 5;
  opacity: 0.9;
}
.facetext text {
  font: 35px "Open Sans", sans-serif;
  fill: #6c7379;
  text-anchor: middle;
}
.facetext .small {
  font-size: 26px;
}
.minicube path {
  fill: #e2eefb;
  stroke: #222;
  stroke-width: 3;
}
.minicube path:last-child {
  fill: none;
}
.gizmo {
  position: absolute;
  right: 0;
  bottom: 18px;
  width: 30px;
  height: 36px;
  overflow: visible;
}
.gizmo text {
  font: 700 10px "Open Sans", sans-serif;
}
.tooltip {
  position: absolute;
  left: 107px;
  top: 5px;
  display: grid;
  gap: 6px;
  padding: 2px 4px 1px 3px;
  background: #ffffe1;
  border: 1px solid #dedede;
  box-shadow: 2px 2px 1px #777;
  white-space: nowrap;
}
.tabs.docs {
  height: 35px;
}
.tabs.docs button {
  display: flex;
  align-items: center;
  width: 141px;
  height: 30px;
  padding: 1px 6px 0 4px;
  border-radius: 0 0 4px 4px;
}
.tabs.docs .on {
  width: 118px;
  height: 33px;
  border-top-color: transparent;
}
.tabs.docs svg {
  width: 17px;
  height: 17px;
}
.tabs.docs span {
  flex: 1;
  text-align: center;
}
.tabs.docs .x {
  width: 15px;
  height: 15px;
}

.status {
  flex: 0 0 28px;
  display: flex;
  align-items: center;
  gap: 6px;
  padding: 0 1px 0 6px;
}
.status p {
  flex: 1;
  white-space: nowrap;
}
.status button {
  display: flex;
  align-items: center;
  height: 26px;
  padding: 0 4px;
  border: 1px solid #a9a9a9;
  border-radius: 3px;
  background: linear-gradient(#fdfdfd, #f4f4f4);
  white-space: nowrap;
}
.status .caret {
  margin-left: auto;
}
.s-color {
  width: 50px;
}
.s-color svg {
  width: 14px;
  height: 14px;
  margin-left: 12px;
}
.s-nav {
  width: 98px;
}
.s-nav svg {
  width: 16px;
  height: 16px;
  margin: 0 2px 0 4px;
}
.status .s-size {
  width: 160px;
  padding-left: 8px;
}
.resize {
  width: 12px;
  height: 12px;
  align-self: flex-end;
  fill: #aaa;
}
.notes {
  position: absolute;
  left: -1px;
  top: -1px;
  width: 100vw;
  height: 100vh;
  pointer-events: none;
}
.red {
  fill: #e90b0b;
  stroke: #e90b0b;
  stroke-linejoin: round;
}
.shaft {
  stroke-width: 5;
  stroke-linecap: round;
}
.notes text {
  font: 28px "Liberation Sans", Arial, sans-serif;
  fill: #fff;
  text-anchor: middle;
}
.cursor {
  fill: #fff;
  stroke: #111;
}
</style>
